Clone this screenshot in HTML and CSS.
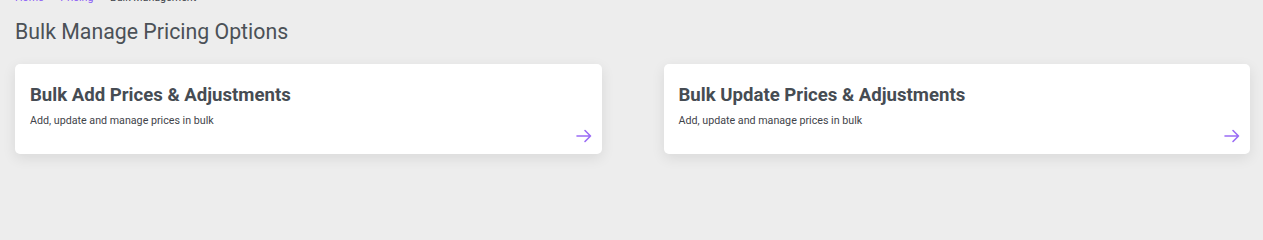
FILE: index.html
```
<!DOCTYPE html>
<html>
<head>
<meta charset="utf-8">
<link rel="stylesheet" href="styles.css">
</head>
<body>
<div class="page">
  <nav class="crumbs">
    <a class="crumb-link">Home</a><span class="sep">&gt;</span><a class="crumb-link">Pricing</a><span class="sep">&gt;</span><span class="crumb-current">Bulk Management</span>
  </nav>
  <h1 class="title">Bulk Manage Pricing Options</h1>
  <div class="cards">
    <div class="card">
      <h2 class="card-title">Bulk Add Prices &amp; Adjustments</h2>
      <p class="card-sub">Add, update and manage prices in bulk</p>
      <div class="card-foot">
        <svg class="arrow" width="16" height="14" viewBox="0 0 16 14"><path d="M1 7H14.5M9 1.5L14.5 7L9 12.5" fill="none" stroke="currentColor" stroke-width="1.6" stroke-linecap="round" stroke-linejoin="round"/></svg>
      </div>
    </div>
    <div class="card">
      <h2 class="card-title">Bulk Update Prices &amp; Adjustments</h2>
      <p class="card-sub">Add, update and manage prices in bulk</p>
      <div class="card-foot">
        <svg class="arrow" width="16" height="14" viewBox="0 0 16 14"><path d="M1 7H14.5M9 1.5L14.5 7L9 12.5" fill="none" stroke="currentColor" stroke-width="1.6" stroke-linecap="round" stroke-linejoin="round"/></svg>
      </div>
    </div>
  </div>
</div>
</body>
</html>
```
FILE: styles.css
```
html, body {
  margin: 0;
  padding: 0;
  background: #ededed;
  font-family: Roboto, "Liberation Sans", Arial, sans-serif;
  height: 100%;
  overflow: hidden;
}
.page {
  padding: 0 13px 0 15px;
  margin-top: -9px;
}
.crumbs {
  font-size: 10.7px;
  line-height: 13px;
  height: 13px;
  display: flex;
}
.crumb-link {
  color: #8b5cf6;
}
.sep {
  color: #9a9ea3;
  margin: 0 5.5px;
}
.crumb-current {
  color: #3f444a;
}
.title {
  margin: 15px 0 0 0;
  font-size: 21.3px;
  line-height: 25px;
  font-weight: 400;
  color: #4b5157;
}
.cards {
  display: grid;
  grid-template-columns: 1fr 1fr;
  column-gap: 62px;
  margin-top: 20px;
}
.card {
  background: #fff;
  border-radius: 5px;
  box-shadow: 0 4px 14px rgba(0, 0, 0, 0.09);
  height: 90px;
  box-sizing: border-box;
  padding: 20px 10px 11px 15px;
  display: flex;
  flex-direction: column;
}
.card-title {
  margin: 0;
  font-size: 18.6px;
  line-height: 22px;
  font-weight: 700;
  color: #464c53;
}
.card-sub {
  margin: 8px 0 0 0;
  font-size: 10.7px;
  line-height: 13px;
  color: #3f444a;
}
.card-foot {
  margin-top: auto;
  display: flex;
  justify-content: flex-end;
}
.arrow {
  color: #9b6cf5;
  display: block;
}
```
